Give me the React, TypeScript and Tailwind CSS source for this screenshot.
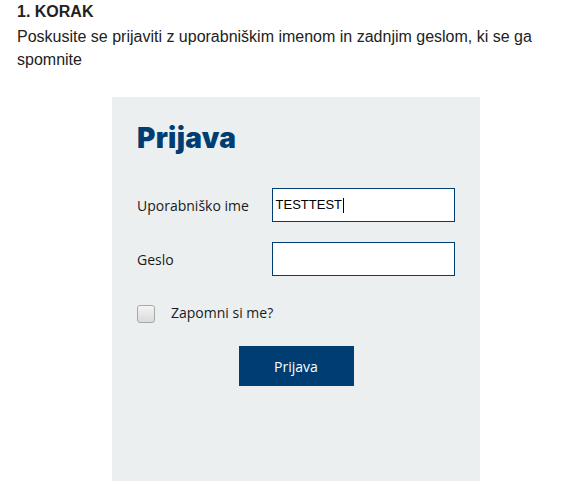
import React from "react";

export default function App() {
  return (
    <div className="w-[569px] h-[489px] bg-white overflow-hidden">
      <div className="pl-[17px] w-[552px] text-[16px] leading-[23px] text-[#222222] font-['Liberation_Sans',Arial,sans-serif]">
        <div className="font-bold mb-[2px]">1. KORAK</div>
        <p>Poskusite se prijaviti z uporabniškim imenom in zadnjim geslom, ki se ga spomnite</p>
      </div>
      <div className="mt-[26px] ml-[112px] w-[368px] h-[384px] bg-[#ebeff0] pt-[27px] px-[25px] font-['Open_Sans',sans-serif] text-[#1a1a1a]">
        <h1 className="font-['Inter',sans-serif] font-black text-[28px] leading-[28px] text-[#003d73] tracking-[0.3px]">
          Prijava
        </h1>
        <div className="mt-[36px] flex items-center">
          <span className="w-[135px] text-[14px]">Uporabniško ime</span>
          <div className="w-[184px] h-[34px] border border-[#003d73] bg-white flex items-center pl-[3px] font-['Liberation_Sans',Arial,sans-serif] text-[13px] text-black">
            <span>TESTTEST</span>
            <span className="ml-[1px] w-px h-[15px] bg-black" />
          </div>
        </div>
        <div className="mt-[20px] flex items-center">
          <span className="w-[135px] text-[14px]">Geslo</span>
          <div className="w-[184px] h-[34px] border border-[#003d73] bg-white" />
        </div>
        <div className="mt-[29px] flex items-center">
          <span className="w-[18px] h-[18px] rounded-[3px] border border-[#a8a8a8] bg-gradient-to-b from-[#f4f4f4] to-[#dadada]" />
          <span className="ml-[16px] text-[14px] -mt-[3px]">Zapomni si me?</span>
        </div>
        <div className="mt-[23px] flex justify-center">
          <button className="w-[115px] h-[40px] bg-[#003d73] text-white text-[14px]">Prijava</button>
        </div>
      </div>
    </div>
  );
}
